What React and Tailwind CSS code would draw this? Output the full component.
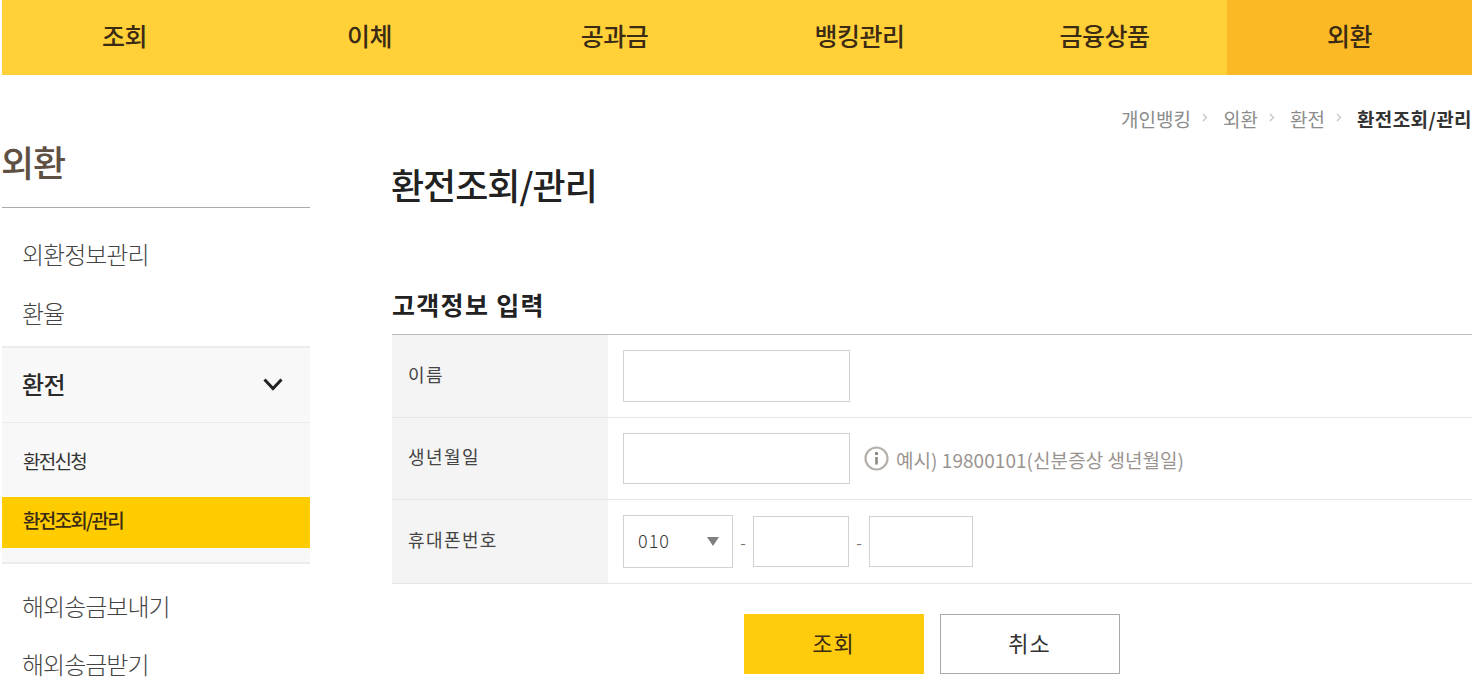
const menus = ['조회', '이체', '공과금', '뱅킹관리', '금융상품', '외환']
const crumbs = ['개인뱅킹', '외환', '환전']

function Crumb({ label }) {
  return (
    <>
      <span className="text-[19px] leading-[24px] text-[#8c8c8c]">{label}</span>
      <svg className="ml-[11px] mr-[15px] mb-[3px]" width="6" height="9" viewBox="0 0 6 9" fill="none">
        <path d="M1 1l3.5 3.5L1 8" stroke="#c4c4c4" strokeWidth="1.3" />
      </svg>
    </>
  )
}

function Row({ label, h, children }) {
  return (
    <div className={`flex border-b border-[#e6e6e6] ${h}`}>
      <div className="w-[216px] bg-[#f4f4f4] pl-[16px] pb-[4px] flex items-center text-[18px] tracking-[1.4px] text-[#444]">{label}</div>
      <div className="flex-1 pl-[15px] flex items-center">{children}</div>
    </div>
  )
}

export default function App() {
  return (
    <div className="w-[1476px] h-[699px] overflow-hidden bg-white pl-[2px] pr-[4px]" style={{ fontFamily: '"Noto Sans CJK KR", "Noto Sans", sans-serif' }}>
      {/* Top nav */}
      <nav className="flex h-[75px] bg-[#ffd038]">
        {menus.map((m) => (
          <div key={m} className={`w-[245px] pb-[3px] flex items-center justify-center text-[25px] font-medium tracking-[-0.5px] text-[#3b2a14] ${m === '외환' ? 'bg-[#fbba25]' : ''}`}>
            {m}
          </div>
        ))}
      </nav>

      <div className="flex">
        {/* Sidebar */}
        <aside className="w-[308px] mr-[82px] shrink-0 pt-[60px]">
          <h2 className="h-[73px] border-b border-[#aaa] text-[36px] leading-[52px] font-medium tracking-[-1px] -indent-[1px] text-[#5f5044]">외환</h2>
          <div className="pl-[20px] pt-[16px] text-[24px] font-light tracking-[-1px] text-[#444]">
            <div className="h-[59px] leading-[59px]">외환정보관리</div>
            <div className="h-[59px] leading-[59px]">환율</div>
          </div>
          <div className="bg-[#f8f8f8] border-t-2 border-b-2 border-[#ececec] mt-[4px] h-[218px]">
            <div className="h-[75px] border-b border-[#ececec] pl-[20px] pr-[27px] pb-[2px] flex items-center justify-between">
              <span className="text-[24px] font-medium tracking-[-0.5px] text-[#2a2a2a]">환전</span>
              <svg width="20" height="13" viewBox="0 0 20 13" fill="none">
                <path d="M1.5 1.5L10 10.5L18.5 1.5" stroke="#222" strokeWidth="3" />
              </svg>
            </div>
            <div className="h-[74px] pl-[21px] pt-[2px] flex items-center text-[19px] tracking-[-1.75px] text-[#333]">환전신청</div>
            <div className="h-[51px] bg-[#ffcc00] pl-[21px] pb-[4px] flex items-center text-[19px] font-medium tracking-[-1.75px] text-[#3b2a14]">환전조회/관리</div>
          </div>
          <div className="pl-[20px] pt-[13px] text-[24px] font-light tracking-[-1px] text-[#444]">
            <div className="h-[58px] leading-[58px]">해외송금보내기</div>
            <div className="h-[58px] leading-[58px]">해외송금받기</div>
          </div>
        </aside>

        {/* Main */}
        <main className="flex-1 min-w-0">
          <div className="flex items-center justify-end h-[24px] mt-[32px]">
            {crumbs.map((c) => (
              <Crumb key={c} label={c} />
            ))}
            <span className="text-[19px] leading-[24px] font-bold tracking-[0.4px] text-[#333]">환전조회/관리</span>
          </div>
          <h1 className="mt-[26px] text-[36px] leading-[54px] font-medium tracking-[-1px] -indent-[1px] text-[#222]">환전조회/관리</h1>
          <h3 className="mt-[75px] text-[25px] leading-[36px] font-bold tracking-[1.3px] text-[#222]">고객정보 입력</h3>

          <div className="mt-[12px] border-t border-[#bbb]">
            <Row label="이름" h="h-[83px]">
              <input className="w-[227px] h-[52px] border border-[#d2d2d2]" />
            </Row>
            <Row label="생년월일" h="h-[82px]">
              <input className="w-[227px] h-[51px] border border-[#d2d2d2]" />
              <svg className="ml-[14px]" width="25" height="25" viewBox="0 0 25 25" fill="none">
                <circle cx="12.5" cy="12.5" r="11" stroke="#b5b0ab" strokeWidth="2.2" />
                <circle cx="12.5" cy="7.5" r="1.7" fill="#8c8782" />
                <path d="M12.5 11v7.5" stroke="#8c8782" strokeWidth="2.6" />
              </svg>
              <span className="ml-[7px] pt-[3px] text-[19px] tracking-[0.05px] text-[#9a9490]">예시) 19800101(신분증상 생년월일)</span>
            </Row>
            <Row label="휴대폰번호" h="h-[84px]">
              <div className="w-[110px] h-[53px] border border-[#d2d2d2] pl-[14px] pr-[13px] flex items-center justify-between">
                <span className="pb-[2px] text-[18px] font-light tracking-[1px] text-[#333]">010</span>
                <svg width="12" height="9" viewBox="0 0 12 9">
                  <path d="M0 0h12L6 9z" fill="#808080" />
                </svg>
              </div>
              <span className="w-[20px] text-center text-[16px] text-[#777]">-</span>
              <input className="w-[96px] h-[51px] border border-[#d2d2d2]" />
              <span className="w-[20px] text-center text-[16px] text-[#777]">-</span>
              <input className="w-[104px] h-[51px] border border-[#d2d2d2]" />
            </Row>
          </div>

          <div className="mt-[30px] flex justify-center gap-[16px] pr-[1px]">
            <button className="w-[180px] h-[60px] pb-[4px] bg-[#ffcc0d] text-[22px] tracking-[1px] text-[#3b2a14]">조회</button>
            <button className="w-[180px] h-[60px] pb-[4px] border border-[#aaa] bg-white text-[22px] tracking-[1px] text-[#333]">취소</button>
          </div>
        </main>
      </div>
    </div>
  )
}
